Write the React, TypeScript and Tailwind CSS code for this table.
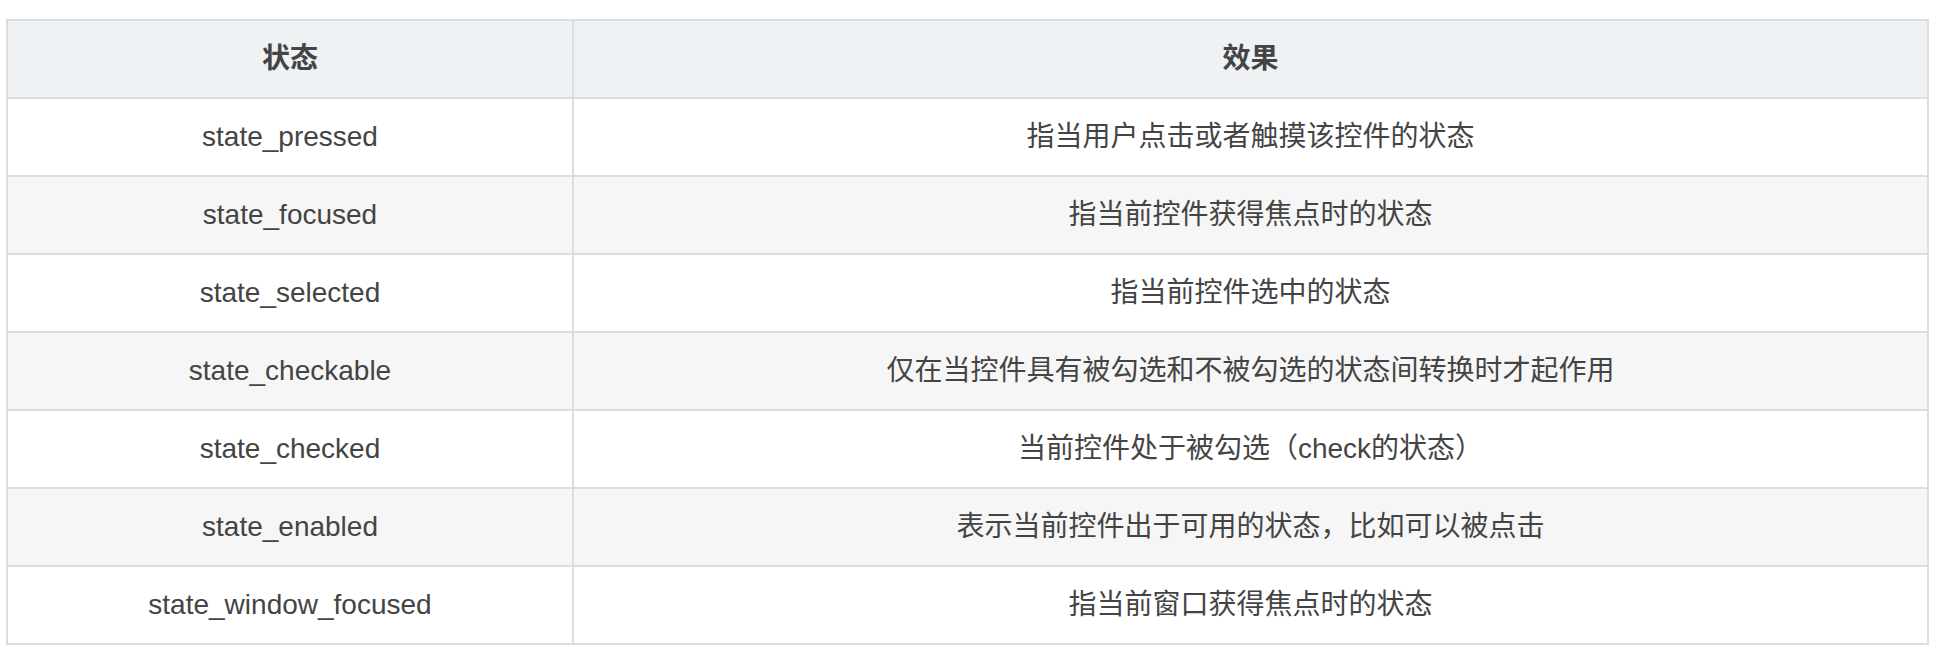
const rows = [
  { state: "state_pressed", effect: "指当用户点击或者触摸该控件的状态" },
  { state: "state_focused", effect: "指当前控件获得焦点时的状态" },
  { state: "state_selected", effect: "指当前控件选中的状态" },
  { state: "state_checkable", effect: "仅在当控件具有被勾选和不被勾选的状态间转换时才起作用" },
  { state: "state_checked", effect: "当前控件处于被勾选（check的状态）" },
  { state: "state_enabled", effect: "表示当前控件出于可用的状态，比如可以被点击" },
  { state: "state_window_focused", effect: "指当前窗口获得焦点时的状态" },
];

export default function App() {
  return (
    <div
      className="bg-white w-[1945px] h-[671px] pl-[6px] pt-[19px] text-[#444444]"
      style={{ fontFamily: '"Liberation Sans", Arial, "Noto Sans CJK SC", sans-serif' }}
    >
      <table className="w-[1923px] border-collapse border-2 border-[#dddddd] text-[28px] leading-[32px]">
        <thead>
          <tr className="h-[78px] bg-[#eef2f5]">
            <th className="w-[566px] border-2 border-[#dddddd] font-bold text-center">状态</th>
            <th className="border-2 border-[#dddddd] font-bold text-center">效果</th>
          </tr>
        </thead>
        <tbody>
          {rows.map((r, i) => (
            <tr key={r.state} className={i % 2 === 1 ? "h-[78px] bg-[#f6f6f6]" : "h-[78px] bg-white"}>
              <td className="border-2 border-[#dddddd] text-center">{r.state}</td>
              <td className="border-2 border-[#dddddd] text-center">{r.effect}</td>
            </tr>
          ))}
        </tbody>
      </table>
    </div>
  );
}
